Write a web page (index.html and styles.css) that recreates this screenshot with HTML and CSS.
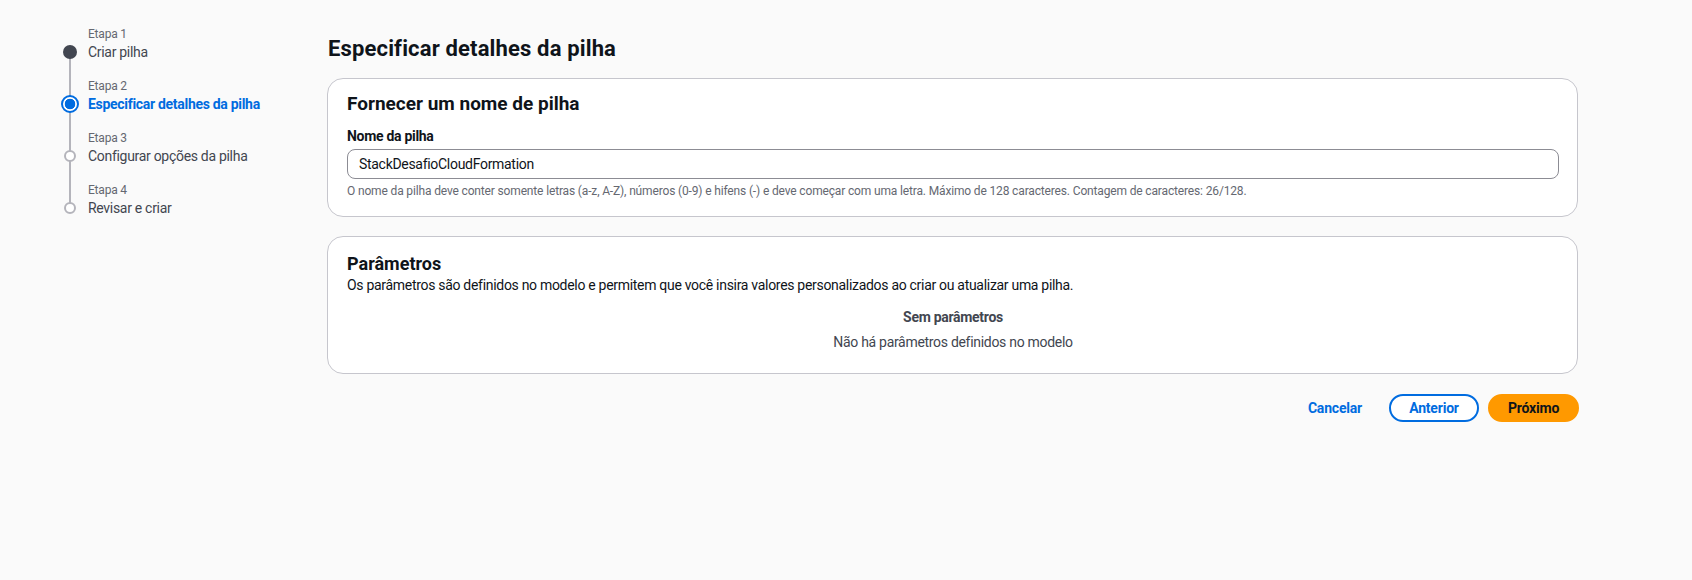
FILE: index.html
```html
<!DOCTYPE html>
<html lang="pt">
<head>
<meta charset="utf-8">
<title>Especificar detalhes da pilha</title>
<link rel="stylesheet" href="styles.css">
</head>
<body>
<div class="layout">
  <nav class="steps">
    <ol class="step-list">
      <li class="step done">
        <span class="step-num">Etapa 1</span>
        <span class="step-row"><span class="dot dot-done"></span><span class="step-name">Criar pilha</span></span>
      </li>
      <li class="step active">
        <span class="step-num">Etapa 2</span>
        <span class="step-row"><span class="dot dot-active"></span><span class="step-name">Especificar detalhes da pilha</span></span>
      </li>
      <li class="step">
        <span class="step-num">Etapa 3</span>
        <span class="step-row"><span class="dot dot-todo"></span><span class="step-name">Configurar opções da pilha</span></span>
      </li>
      <li class="step last">
        <span class="step-num">Etapa 4</span>
        <span class="step-row"><span class="dot dot-todo"></span><span class="step-name">Revisar e criar</span></span>
      </li>
    </ol>
  </nav>
  <main class="main">
    <h1 class="page-title">Especificar detalhes da pilha</h1>
    <section class="card card-name">
      <h2 class="card-title">Fornecer um nome de pilha</h2>
      <label class="field-label" for="stackname">Nome da pilha</label>
      <input class="field-input" id="stackname" type="text" value="StackDesafioCloudFormation">
      <p class="field-hint">O nome da pilha deve conter somente letras (a-z, A-Z), números (0-9) e hifens (-) e deve começar com uma letra. Máximo de 128 caracteres. Contagem de caracteres: 26/128.</p>
    </section>
    <section class="card card-params">
      <h2 class="card-title card-title-sm">Parâmetros</h2>
      <p class="card-desc">Os parâmetros são definidos no modelo e permitem que você insira valores personalizados ao criar ou atualizar uma pilha.</p>
      <div class="empty">
        <p class="empty-title">Sem parâmetros</p>
        <p class="empty-text">Não há parâmetros definidos no modelo</p>
      </div>
    </section>
    <div class="actions">
      <button class="btn btn-link" type="button">Cancelar</button>
      <button class="btn btn-normal" type="button">Anterior</button>
      <button class="btn btn-primary" type="button">Próximo</button>
    </div>
  </main>
</div>
</body>
</html>
```
FILE: styles.css
```css
* { box-sizing: border-box; }
html, body { margin: 0; padding: 0; }
body {
  background: #fafafa;
  color: #0f141a;
  font-family: Roboto, "Open Sans", "Liberation Sans", sans-serif;
  font-size: 14px;
  line-height: 20px;
  letter-spacing: -0.3px;
  width: 1692px;
  height: 580px;
}
.layout {
  display: flex;
  padding: 26px 0 0 63px;
}
.steps {
  width: 264px;
  flex: none;
}
.step-list {
  list-style: none;
  margin: 0;
  padding: 0;
}
.step {
  display: flex;
  flex-direction: column;
  position: relative;
  padding-bottom: 16px;
}
.step-num {
  display: block;
  padding-left: 25px;
  font-size: 12px;
  line-height: 16px;
  letter-spacing: -0.2px;
  color: #656871;
}
.step-row {
  display: flex;
  align-items: center;
  gap: 11px;
  height: 20px;
}
.step-name {
  color: #424650;
}
.step.active .step-name { color: #006ce0; font-weight: 700; }
.step::after {
  content: "";
  position: absolute;
  left: 6px;
  width: 2px;
  background: #b4b4bb;
  top: 26px;
  bottom: -26px;
  z-index: 0;
}
.step.last::after { display: none; }
.dot {
  position: relative;
  z-index: 1;
  flex: none;
  width: 14px;
  height: 14px;
  border-radius: 50%;
}
.dot-done { background: #424650; }
.dot-active {
  width: 18px;
  height: 18px;
  margin: 0 -2px;
  border: 2px solid #006ce0;
  background: radial-gradient(circle, #006ce0 0 5px, #ffffff 5.6px);
}
.dot-todo {
  width: 12px;
  height: 12px;
  margin: 0 1px;
  border: 2px solid #b4b4bb;
  background: #ffffff;
}
.main {
  width: 1251px;
  flex: none;
  display: flex;
  flex-direction: column;
}
.page-title {
  margin: 11px 0 17px 1px;
  font-size: 22px;
  line-height: 24px;
  font-weight: 700;
  letter-spacing: 0.15px;
}
.card {
  background: #ffffff;
  border: 1px solid #c6c6cd;
  border-radius: 16px;
  padding: 13px 18px 17px 19px;
  display: flex;
  flex-direction: column;
}
.card-title {
  margin: 0;
  font-size: 19px;
  line-height: 24px;
  font-weight: 700;
  letter-spacing: 0;
}
.card-title-sm {
  font-size: 18px;
  line-height: 22px;
}
.field-label {
  margin-top: 10px;
  font-weight: 700;
}
.field-input {
  margin-top: 3px;
  height: 30px;
  border: 1px solid #8c8c94;
  border-radius: 8px;
  padding: 0 11px;
  font: inherit;
  letter-spacing: -0.3px;
  color: #0f141a;
  background: #ffffff;
}
.field-hint {
  margin: 4px 0 0;
  font-size: 12px;
  line-height: 16px;
  letter-spacing: -0.15px;
  color: #656871;
}
.card-params {
  margin-top: 19px;
  padding-top: 16px;
  padding-bottom: 21px;
}
.card-desc {
  margin: 0;
  color: #0f141a;
}
.empty {
  margin-top: 12px;
  text-align: center;
}
.empty-title {
  margin: 0;
  font-weight: 700;
  color: #424650;
}
.empty-text {
  margin: 5px 0 0;
  color: #424650;
}
.actions {
  display: flex;
  justify-content: flex-end;
  align-items: center;
  gap: 9px;
  margin-top: 20px;
  margin-right: -1px;
}
.btn {
  font: inherit;
  font-weight: 700;
  letter-spacing: -0.2px;
  height: 28px;
  border-radius: 20px;
  padding: 0 18px;
  cursor: pointer;
  line-height: 20px;
}
.btn-link {
  background: none;
  border: none;
  color: #006ce0;
}
.btn-normal {
  background: #ffffff;
  border: 2px solid #006ce0;
  color: #006ce0;
  width: 90px;
}
.btn-primary {
  background: #ff9900;
  border: 2px solid #ff9900;
  color: #0f141a;
  width: 91px;
}
```
